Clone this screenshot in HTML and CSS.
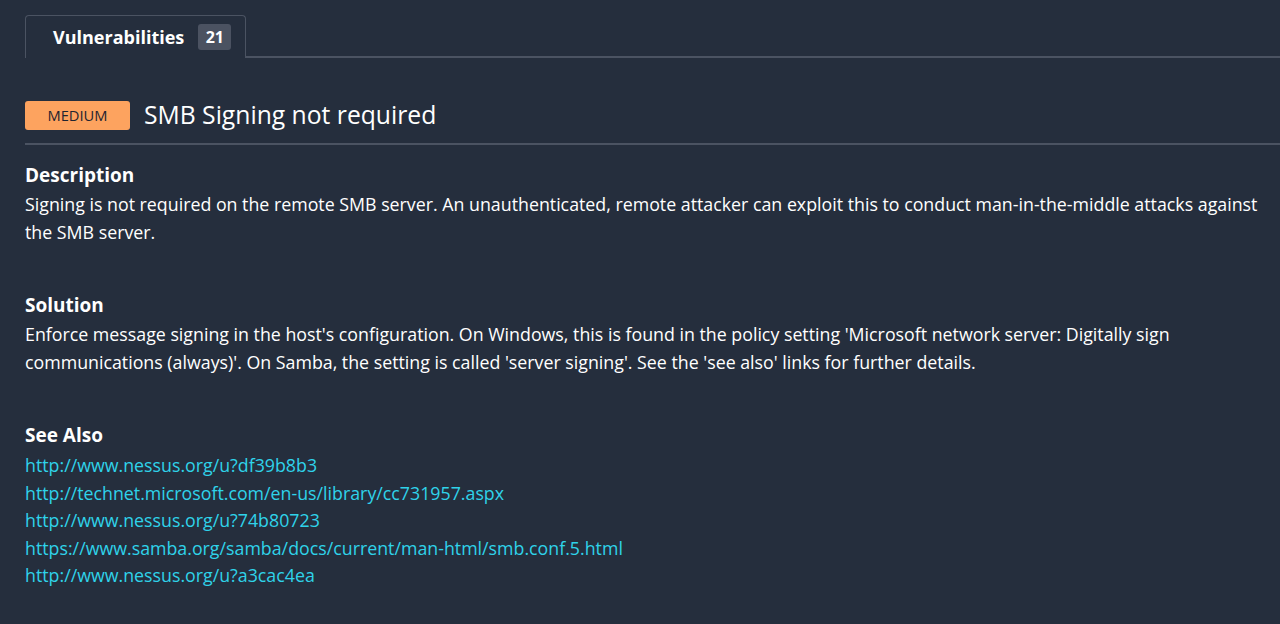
FILE: index.html
```html
<!DOCTYPE html>
<html>
<head>
<meta charset="utf-8">
<link rel="stylesheet" href="styles.css">
</head>
<body>
<div class="page">
  <div class="tabs">
    <div class="tab">
      <span class="tab-label">Vulnerabilities</span>
      <span class="count">21</span>
    </div>
    <div class="tab-rest"></div>
  </div>
  <div class="title-row">
    <span class="severity">MEDIUM</span>
    <h1 class="title">SMB Signing not required</h1>
  </div>
  <section class="section">
    <h2 class="heading">Description</h2>
    <p class="text">Signing is not required on the remote SMB server. An unauthenticated, remote attacker can exploit this to conduct man-in-the-middle attacks against the SMB server.</p>
  </section>
  <section class="section">
    <h2 class="heading">Solution</h2>
    <p class="text">Enforce message signing in the host's configuration. On Windows, this is found in the policy setting 'Microsoft network server: Digitally sign communications (always)'. On Samba, the setting is called 'server signing'. See the 'see also' links for further details.</p>
  </section>
  <section class="section">
    <h2 class="heading">See Also</h2>
    <ul class="links">
      <li><a class="link" href="#">http://www.nessus.org/u?df39b8b3</a></li>
      <li><a class="link" href="#">http://technet.microsoft.com/en-us/library/cc731957.aspx</a></li>
      <li><a class="link" href="#">http://www.nessus.org/u?74b80723</a></li>
      <li><a class="link" href="#">https://www.samba.org/samba/docs/current/man-html/smb.conf.5.html</a></li>
      <li><a class="link" href="#">http://www.nessus.org/u?a3cac4ea</a></li>
    </ul>
  </section>
</div>
</body>
</html>
```
FILE: styles.css
```css
html, body {
  margin: 0;
  padding: 0;
  background: #252e3d;
  color: #ffffff;
  font-family: "Open Sans", "Noto Sans", sans-serif;
}
.page {
  padding: 15px 14px 0 25px;
}
.tabs {
  display: flex;
  margin-right: -14px;
}
.tab {
  box-sizing: border-box;
  display: flex;
  align-items: center;
  gap: 14px;
  width: 221px;
  height: 43px;
  padding: 0 0 0 27px;
  border: 1px solid #4b5362;
  border-bottom: none;
  border-radius: 4px 4px 0 0;
}
.tab-label {
  font-size: 18px;
  font-weight: 700;
  color: #ffffff;
}
.count {
  display: inline-flex;
  align-items: center;
  justify-content: center;
  width: 33px;
  height: 26px;
  border-radius: 3px;
  background: #4b5261;
  font-size: 16px;
  font-weight: 700;
  color: #ffffff;
}
.tab-rest {
  flex: 1;
  border-bottom: 2px solid #4b5362;
}
.title-row {
  display: flex;
  align-items: center;
  gap: 14px;
  margin-top: 41px;
  padding-bottom: 12px;
  border-bottom: 2px solid #4b5362;
  margin-right: -14px;
}
.severity {
  display: inline-flex;
  align-items: center;
  justify-content: center;
  width: 105px;
  height: 29px;
  box-sizing: border-box;
  background: #fda35f;
  border-radius: 3px;
  color: #1f2430;
  font-size: 14.7px;
}
.title {
  margin: 0;
  font-size: 24.7px;
  font-weight: 400;
  line-height: 32px;
  color: #ffffff;
}
.section {
  margin-top: 15px;
}
.section + .section {
  margin-top: 44px;
}
.heading {
  margin: 0;
  font-size: 19px;
  font-weight: 700;
  line-height: 30px;
  color: #ffffff;
}
.text {
  margin: 0;
  font-size: 17.8px;
  line-height: 28px;
  color: #ffffff;
}
.links {
  list-style: none;
  margin: 2px 0 0;
  padding: 0;
}
.links li {
  font-size: 17.8px;
  line-height: 27.5px;
}
.link {
  color: #2fd3ea;
  text-decoration: none;
}
```
